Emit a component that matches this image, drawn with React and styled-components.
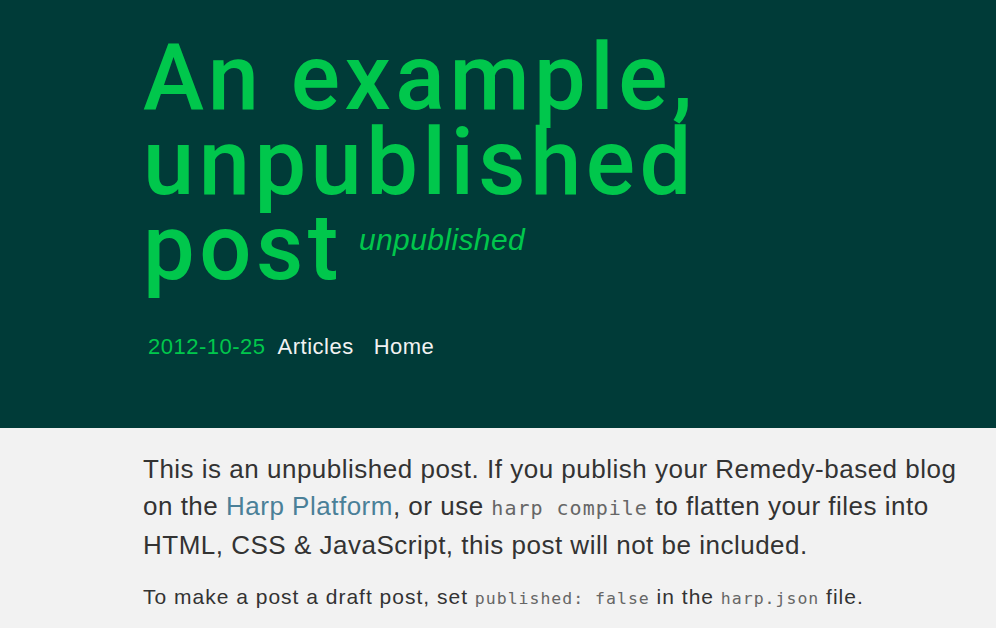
import React from "react";
import styled, { createGlobalStyle } from "styled-components";

const Global = createGlobalStyle`
  html, body { margin: 0; padding: 0; background: #f2f2f2; }
  body { font-family: "Liberation Sans", Arial, sans-serif; }
`;

const Header = styled.header`
  background: #003b38;
  height: 428px;
  box-sizing: border-box;
  padding: 35px 0 0 143px;
`;

const Title = styled.h1`
  margin: 0;
  width: 620px;
  color: #00c74c;
  font-family: Roboto, "Liberation Sans", Arial, sans-serif;
  font-weight: 500;
  font-size: 92px;
  line-height: 85px;
  letter-spacing: 4.5px;
`;

const Draft = styled.em`
  display: inline-block;
  vertical-align: top;
  margin: 20px 0 0 16px;
  font-family: "Liberation Sans", Arial, sans-serif;
  font-weight: normal;
  font-size: 30px;
  line-height: 30px;
  letter-spacing: 0.4px;
`;

const Meta = styled.nav`
  display: flex;
  align-items: baseline;
  gap: 12px;
  margin: 44px 0 0 5px;
  font-size: 22px;
  letter-spacing: 0.5px;
`;

const Date = styled.span`
  color: #00c74c;
`;

const NavLink = styled.a`
  color: #f2f2f2;
  text-decoration: none;
  margin-left: ${(p) => (p.$spaced ? "8px" : "0")};
`;

const Main = styled.main`
  padding: 23px 0 0 143px;
  color: #333;
`;

const Lead = styled.p`
  margin: 0;
  width: 830px;
  font-size: 26px;
  line-height: 37px;
  letter-spacing: 0.5px;
`;

const Small = styled.p`
  margin: 18px 0 0;
  font-size: 21px;
  line-height: 30px;
  letter-spacing: 1px;
`;

const Link = styled.a`
  color: #4a8098;
  text-decoration: none;
`;

const Code = styled.code`
  font-family: "DejaVu Sans Mono", "Liberation Mono", monospace;
  font-size: ${(p) => p.$size || "20px"};
  letter-spacing: 1px;
  color: #666;
`;

export default function App() {
  return (
    <>
      <Global />
      <Header>
        <Title>
          An example, unpublished post<Draft>unpublished</Draft>
        </Title>
        <Meta>
          <Date>2012-10-25</Date>
          <NavLink href="#">Articles</NavLink>
          <NavLink href="#" $spaced>Home</NavLink>
        </Meta>
      </Header>
      <Main>
        <Lead>
          This is an unpublished post. If you publish your Remedy-based blog on the{" "}
          <Link href="#">Harp Platform</Link>, or use <Code>harp compile</Code> to flatten your
          files into HTML, CSS &amp; JavaScript, this post will not be included.
        </Lead>
        <Small>
          To make a post a draft post, set <Code $size="16.5px">published: false</Code> in the{" "}
          <Code $size="16.5px">harp.json</Code> file.
        </Small>
      </Main>
    </>
  );
}
